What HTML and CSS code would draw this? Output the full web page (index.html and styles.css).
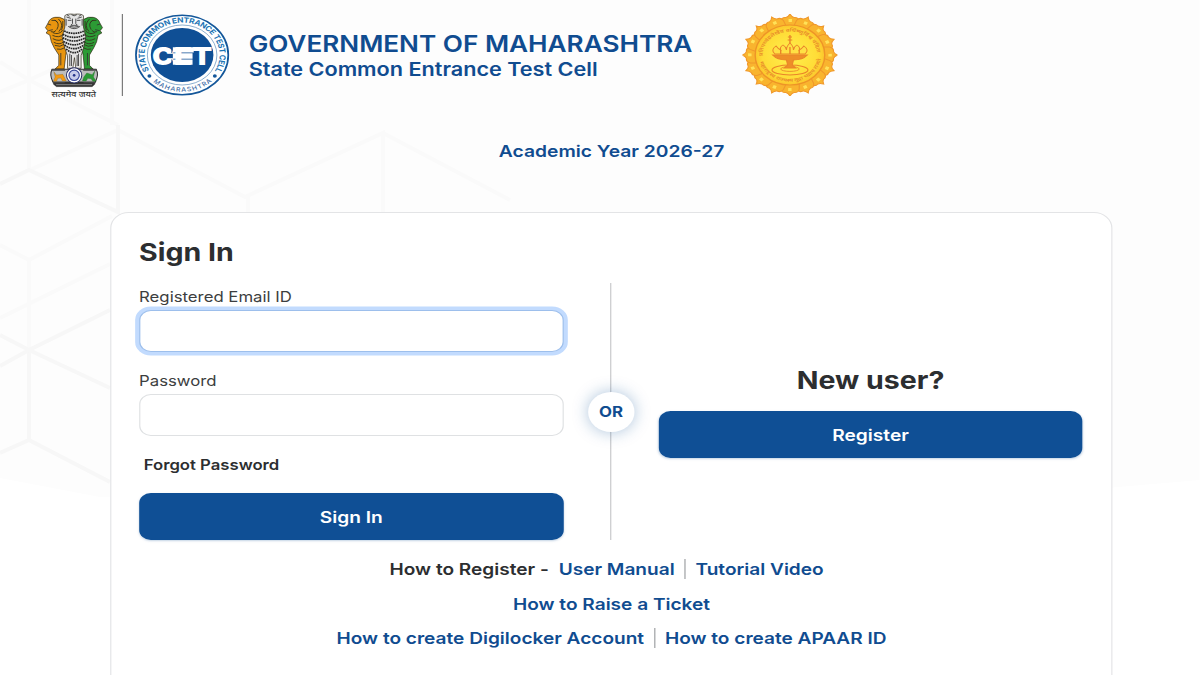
FILE: index.html
```
<!DOCTYPE html>
<html lang="en">
<head>
    <meta charset="UTF-8">
    <title>Sign In | State Common Entrance Test Cell</title>
    <link rel="stylesheet" href="styles.css">
</head>
<body>
<div class="page">
    <svg class="page-bg" viewBox="0 0 1200 675" preserveAspectRatio="none" aria-hidden="true">
        <path class="shade" d="M0 0H1200V480L1000 497H100L0 478Z"/>
        <g class="mesh faint">
            <path d="M29 0V170M29 80L118 125M0 62L29 80L0 92M29 80L60 66"/>
            <path d="M30 170L118 130L245 197L383 133V212M248 197V212"/>
            <path d="M383 133L510 200M112 0V125"/>
            <path d="M0 245L29 260L112 216M29 260V350"/>
            <path d="M0 318L110 264"/>
        </g>
        <g class="mesh">
            <path d="M0 184L29 170L118 212V125"/>
            <path d="M29 350V440L110 482M0 453L29 440"/>
            <path d="M0 335L29 350L110 388M110 310L29 350L0 366"/>
        </g>
    </svg>

    <header class="header">
        <svg class="emblem" viewBox="0 0 270 300" preserveAspectRatio="none" role="img" aria-label="National emblem">
            <g stroke="#2b2410" stroke-width="2" stroke-linejoin="round">
                <path fill="#e8950f" d="M88 43Q74 34 60 37Q44 40 40 54L32 68L39 77L34 84L45 90Q48 112 58 128L72 150V181L61 192H88L93 150L102 100L94 55Z"/>
                <path fill="#2c9b35" d="M147 43Q161 34 175 37Q191 40 195 54L203 68L196 77L201 84L190 90Q187 112 177 128L164 150V181L175 192H149L145 150L134 100L141 55Z"/>
                <path fill="#e4e4e4" d="M90 32Q98 25 118 28Q138 25 146 32L146 66L153 96L146 130L139 152V190H123L119 158L114 190H98V152L90 130L82 96L90 66Z"/>
            </g>
            <path class="fur-dark" d="M88 78Q118 92 148 78M84 88Q118 106 152 88M84 98Q118 118 152 98M86 109Q118 130 150 109M89 120Q118 142 147 120M94 132Q118 154 142 132"/>
            <path class="fur" d="M50 46Q64 44 68 52M60 45Q77 54 66 74M71 42Q90 60 72 80M84 48Q86 64 80 76M48 80Q58 84 64 76M54 83Q72 91 84 76M53 91Q74 101 86 87M54 101Q75 112 87 99M57 112Q74 121 86 111M60 121Q76 128 88 118M66 132Q78 136 90 128"/>
            <path class="fur" d="M185 46Q171 44 167 52M175 45Q158 54 169 74M164 42Q145 60 163 80M151 48Q149 64 155 76M187 80Q177 84 171 76M181 83Q163 91 151 76M182 91Q161 101 149 87M181 101Q160 112 148 99M178 112Q161 121 149 111M175 121Q159 128 147 118M169 132Q157 136 145 128"/>
            <path class="face" d="M95 36L108 40M141 36L128 40M99 46H110M126 46H137M113 41V56L108 61H128L123 56V41M100 64Q118 78 136 64M104 64Q118 69 132 64M94 42V62M142 42V62M39 57L49 60M41 77L54 74M196 57L186 60M194 77L181 74M78 144V181M105 146V183M110 150V183M127 150V183M131 146V183M158 144V181M96 29L104 34M140 29L132 34M110 29Q118 36 126 29"/>
            <g stroke="#282828" stroke-width="3">
                <path fill="#bdbdbd" d="M52 193H184Q193 208 182 230L174 239H62L54 230Q43 209 52 193Z"/>
                <path fill="#333" stroke-width="1" d="M56 230H180V238L172 245H65L56 238Z"/>
                <circle cx="118" cy="211" r="23" fill="#fff" stroke="#252b63"/>
                <circle cx="118" cy="211" r="15.5" fill="#c9cdea" stroke="#38479c" stroke-width="3.5"/>
                <circle cx="118" cy="211" r="4" fill="#26348b" stroke="none"/>
            </g>
            <path fill="#f39a12" stroke="#7d6728" d="M57 200L65 210L84 208L91 222L94 228H83L78 219L69 220L65 229H56L61 216Z"/>
            <path fill="#2c9b35" stroke="#28602c" d="M180 198L172 209L156 204L147 216L143 228H154L159 220L169 221L174 229H184L176 216Z"/>
            <path fill="none" stroke="#444" stroke-width="4" d="M50 195H91M145 195H186M54 233H90M146 233H182"/>
            <path fill="none" stroke="#aaa" stroke-width="2" d="M64 239H172"/>
            <text x="50" y="275" class="motto" textLength="134" lengthAdjust="spacingAndGlyphs">सत्यमेव जयते</text>
        </svg>
        <span class="header-line"></span>
        <svg class="cet" viewBox="-41 -41 82 82" role="img" aria-label="State Common Entrance Test Cell">
            <defs>
                <path id="ringTop" d="M-27.3 17.2A32.3 32.3 0 1 1 27.3 17.2"/>
                <path id="ringBottom" d="M-28.5 23.3A36.8 36.8 0 0 0 28.5 23.3"/>
            </defs>
            <circle r="39.8" fill="#fff" stroke="#14579a" stroke-width="1.5"/>
            <circle r="30" fill="none" stroke="#6695bf" stroke-width=".7"/>
            <circle r="27" fill="#0f4f95"/>
            <text class="cet-ring" textLength="134" lengthAdjust="spacing"><textPath href="#ringTop" startOffset="2">STATE COMMON ENTRANCE TEST CELL</textPath></text>
            <text class="cet-ring low" textLength="56" lengthAdjust="spacing"><textPath href="#ringBottom" startOffset="5">MAHARASHTRA</textPath></text>
            <circle cx="-28.2" cy="21" r="1.7" fill="#14579a"/>
            <circle cx="28.2" cy="21" r="1.7" fill="#14579a"/>
            <text class="cet-name" x="-26" y="10" textLength="52" lengthAdjust="spacingAndGlyphs">CET</text>
            <path d="M-8 -5.1H10M-8 1H9M-8 7.1H9" stroke="#fff" stroke-width="5.4"/>
            <path d="M-9 -8V-2M-9 4.4V10" stroke="#0f4f95" stroke-width=".7"/>
        </svg>
        <div class="header-title">
            <h1>GOVERNMENT OF MAHARASHTRA</h1>
            <h2>State Common Entrance Test Cell</h2>
        </div>
        <svg class="seal" viewBox="-41 -41 82 82" role="img" aria-label="Seal of Maharashtra">
            <defs>
                <radialGradient id="gold"><stop offset="0" stop-color="#fff04e"/><stop offset=".8" stop-color="#ffdc36"/><stop offset="1" stop-color="#fbc52c"/></radialGradient>
                <path id="petal" d="M-8 -29V-34Q-7 -38 -3.5 -37.5Q-1.5 -38 0 -41Q1.5 -38 3.5 -37.5Q7 -38 8 -34V-29Z"/>
                <path id="sealTop" d="M-23.2 4A23.5 23.5 0 1 1 23.2 4"/>
                <path id="sealBottom" d="M-26.5 5A27 27 0 0 0 26.5 5"/>
            </defs>
            <g fill="#f9b42e" stroke="#f0982b" stroke-width="1">
                <use href="#petal"/><use href="#petal" transform="rotate(22.5)"/><use href="#petal" transform="rotate(45)"/><use href="#petal" transform="rotate(67.5)"/>
                <use href="#petal" transform="rotate(90)"/><use href="#petal" transform="rotate(112.5)"/><use href="#petal" transform="rotate(135)"/><use href="#petal" transform="rotate(157.5)"/>
                <use href="#petal" transform="rotate(180)"/><use href="#petal" transform="rotate(202.5)"/><use href="#petal" transform="rotate(225)"/><use href="#petal" transform="rotate(247.5)"/>
                <use href="#petal" transform="rotate(270)"/><use href="#petal" transform="rotate(292.5)"/><use href="#petal" transform="rotate(315)"/><use href="#petal" transform="rotate(337.5)"/>
            </g>
            <!-- one bright dot on each petal -->
            <circle r="34.6" fill="none" stroke="#ffe258" stroke-width="3" stroke-dasharray="3 10.587" stroke-dashoffset="1.5"/>
            <circle r="30" fill="url(#gold)" stroke="#ee9427" stroke-width="1.2"/>
            <text class="seal-ring"><textPath href="#sealTop" startOffset="3" textLength="72" lengthAdjust="spacingAndGlyphs">प्रतिपच्चंद्रलेखेव वर्धिष्णुर्विश्व वंदिता</textPath></text>
            <text class="seal-ring"><textPath href="#sealBottom" startOffset="2" textLength="73" lengthAdjust="spacingAndGlyphs">महाराष्ट्रस्य राज्यस्य मुद्रा भद्राय राजते</textPath></text>
            <g fill="none" stroke="#ea8429">
                <ellipse cy="15" rx="15.5" ry="5" stroke-width="1"/>
                <ellipse cy="14" rx="8" ry="2.4" stroke-width=".8"/>
                <path fill="#ee8e28" d="M-15 0H15Q11 5 3 5L2 10L5 13H-5L-2 10L-3 5Q-11 5 -15 0Z"/>
                <path fill="#ffe044" stroke-width=".9" d="M-13 -1Q-17 -5 -12 -9Q-10 -6 -8 -5Q-9 -8 -6 -10Q-3 -8 -3 -5Q-3 -9 0 -12Q3 -9 3 -5Q3 -8 6 -10Q9 -8 8 -5Q10 -6 12 -9Q17 -5 13 -1Z"/>
                <path stroke-width="1.2" d="M0 -12V-20M-1.8 -18H1.8M-2 -15H2M-8 -1V-5M8 -1V-5M0 -1V-8"/>
            </g>
        </svg>
    </header>

    <p class="year">Academic Year 2026-27</p>

    <main class="card">
        <h3 class="card-title">Sign In</h3>
        <div class="columns">
            <form class="login">
                <label for="email">Registered Email ID</label>
                <input class="field focused" type="text" id="email">
                <label for="password">Password</label>
                <input class="field" type="password" id="password">
                <a class="forgot">Forgot Password</a>
                <button class="btn" type="button">Sign In</button>
            </form>
            <div class="divider"><span class="or">OR</span></div>
            <div class="new-user">
                <h3>New user?</h3>
                <button class="btn" type="button">Register</button>
            </div>
        </div>
        <div class="links">
            <div class="links-row first"><span class="hint">How to Register -</span><a>User Manual</a><i></i><a>Tutorial Video</a></div>
            <div class="links-row"><a>How to Raise a Ticket</a></div>
            <div class="links-row"><a>How to create Digilocker Account</a><i></i><a>How to create APAAR ID</a></div>
        </div>
    </main>
</div>
</body>
</html>
```

FILE: styles.css
```
* {
    box-sizing: border-box;
}
body {
    margin: 0;
    height: 675px;
    overflow: hidden;
    background-color: #fff;
    font-family: Inter, "Liberation Sans", sans-serif;
    color: #2c2e30;
}
.page {
    position: relative;
    width: calc(100% / 1.16);
    height: 675px;
    overflow: hidden;
    transform: scaleX(1.16);
    transform-origin: 0 0;
}
.page-bg {
    position: absolute;
    left: 0;
    top: 0;
    width: 100%;
    height: 100%;
    z-index: -1;
}
.shade {
    fill: #fdfdfd;
}
.mesh {
    fill: none;
    stroke: #f7f7f7;
    stroke-width: 4;
}
.faint {
    stroke: #fafafa;
}
.fur, .fur-dark, .face {
    fill: none;
    stroke: #33301c;
    stroke-width: 2.5;
}
.fur-dark {
    stroke: #222;
    stroke-width: 5;
    stroke-dasharray: 5 2;
}
.face {
    stroke: #333;
}
h1, h2, h3, p {
    margin: 0;
}
.header {
    display: flex;
    height: 105px;
    padding: 5px 0 0 30.2px;
}
.emblem {
    width: 77.6px;
    height: 100px;
    margin-right: -3px;
}
.motto {
    font: 500 22px "Noto Sans Devanagari", "Noto Sans", sans-serif;
    fill: #333;
}
.header-line {
    width: 1px;
    height: 82px;
    margin-top: 9px;
    background-color: #777;
}
.cet {
    width: 82px;
    height: 82px;
    margin: 9px 0 0 10.6px;
}
.cet-ring {
    font: 700 7.2px Inter, sans-serif;
    fill: #1b74b4;
}
.low {
    font-size: 6px;
    font-weight: 500;
    fill: #3a6aa5;
}
.cet-name {
    font: 900 24.5px Inter, sans-serif;
    fill: #fff;
}
.header-title {
    width: 426px;
    margin: 25px 0 0 16px;
    color: #104c90;
    white-space: nowrap;
}
.header-title h1 {
    font-size: 22.55px;
    line-height: 28px;
    font-weight: 600;
}
.header-title h2 {
    font-size: 18.65px;
    line-height: 23px;
    font-weight: 600;
}
.seal {
    width: 82px;
    height: 82px;
    margin-top: 9px;
}
.seal-ring {
    font: 600 4.6px "Noto Sans Devanagari", "Noto Sans", sans-serif;
    fill: #e8892a;
}
.year {
    margin-top: 35px;
    padding-left: 20px;
    font-size: 16.6px;
    line-height: 22px;
    font-weight: 600;
    color: #104c90;
    text-align: center;
}
.card {
    width: 864.6px;
    height: 520px;
    margin: 50px 0 0 94.9px;
    padding: 23px 24px 0;
    border: 1px solid #e3e4e6;
    border-radius: 16px;
    background-color: #fff;
}
.card h3 {
    font-size: 24.6px;
    line-height: 32px;
    font-weight: 700;
}
.columns {
    display: grid;
    grid-template-columns: 366px 81.8px 365.6px;
    height: 257px;
    margin-top: 15px;
}
.login {
    display: flex;
    flex-direction: column;
}
.login label {
    height: 27px;
    font-size: 14.45px;
    line-height: 28px;
    color: #3c3e40;
}
.field {
    height: 42px;
    margin-bottom: 15px;
    border: 1px solid #dfe1e3;
    border-radius: 10px;
    background-color: #fff;
    outline: none;
}
.focused {
    border-color: #9dbfec;
    box-shadow: 0 0 0 3.5px #c2dbfe;
}
.forgot {
    margin-left: 4px;
    font-size: 14.4px;
    line-height: 28px;
    font-weight: 600;
}
.btn {
    display: block;
    width: 100%;
    height: 47px;
    margin-top: auto;
    border: 0;
    border-radius: 10px;
    background-color: #0f4f95;
    box-shadow: 0 1px 2px rgba(15, 79, 149, .25);
    font: 600 16.5px Inter, sans-serif;
    color: #fff;
}
.divider {
    display: flex;
    align-items: center;
    justify-content: center;
    background: linear-gradient(#c6c7c9, #c6c7c9) center / 1.3px 100% no-repeat;
}
.or {
    width: 40px;
    height: 40px;
    border-radius: 50%;
    background-color: #fff;
    box-shadow: 0 0 15px rgba(15, 79, 149, .35);
    font-size: 14.5px;
    line-height: 40px;
    font-weight: 700;
    color: #104c90;
    text-align: center;
}
.new-user {
    padding-top: 81px;
    text-align: center;
}
.new-user .btn {
    margin-top: 15px;
}
.links {
    padding-top: 12px;
}
.links-row {
    display: flex;
    align-items: center;
    justify-content: center;
    height: 34.5px;
    font-size: 16.45px;
    font-weight: 600;
    color: #104c90;
}
.first {
    padding-right: 8.5px;
}
.links-row i {
    width: 1px;
    height: 20px;
    margin: 0 8.5px;
    background-color: #9b9da0;
}
.hint {
    margin-right: 8.5px;
    color: #2c2e30;
}
```
